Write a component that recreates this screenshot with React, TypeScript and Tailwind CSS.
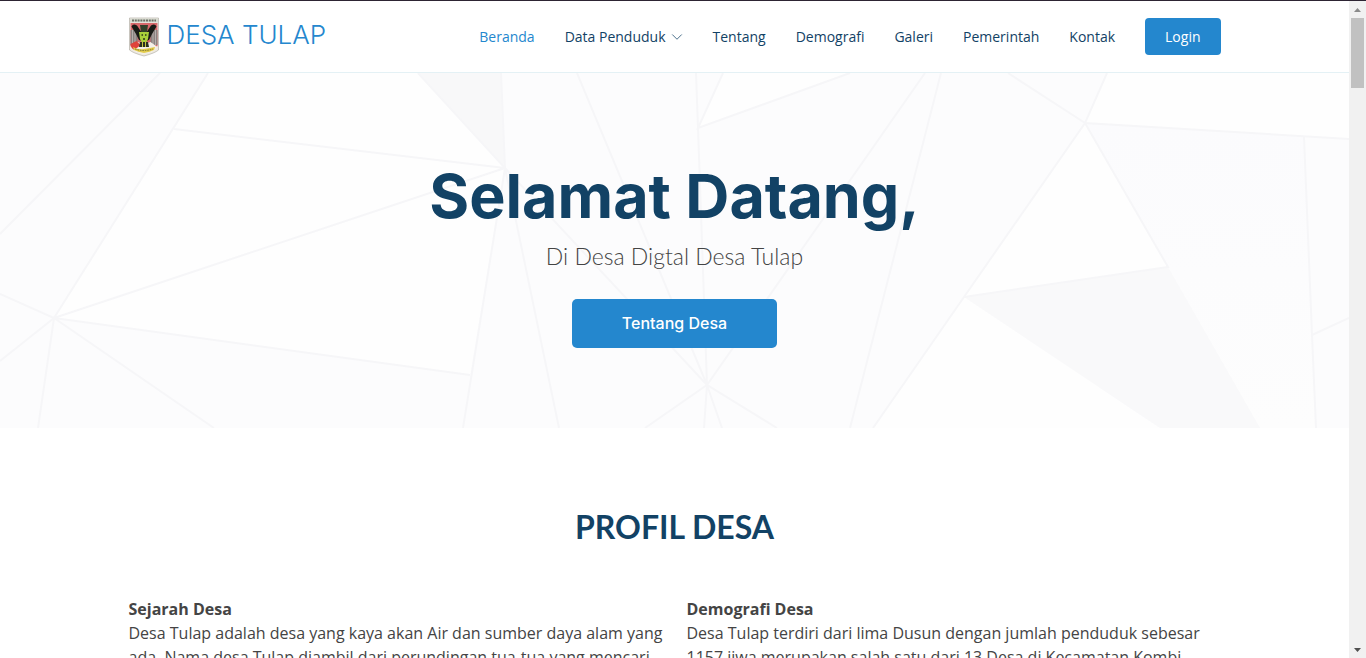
import React from "react";

const links = ["Tentang", "Demografi", "Galeri", "Pemerintah", "Kontak"];

const profiles = [
  {
    title: "Sejarah Desa",
    text: "Desa Tulap adalah desa yang kaya akan Air dan sumber daya alam yang ada. Nama desa Tulap diambil dari perundingan tua-tua yang mencari",
  },
  {
    title: "Demografi Desa",
    text: "Desa Tulap terdiri dari lima Dusun dengan jumlah penduduk sebesar 1157 jiwa merupakan salah satu dari 13 Desa di Kecamatan Kombi",
  },
];

function Crest() {
  return (
    <svg viewBox="0 0 30 40" className="h-10 w-[30px]" aria-hidden="true">
      <path d="M.5 1h29v32Q26 36 15 39Q4 36 .5 33Z" fill="#eeeae2" stroke="#b5b0a8" strokeWidth=".7" />
      <path d="M1 1.500h28v4H1z" fill="#d9dcd2" />
      <path d="M3 3.500h24" stroke="#6d7066" strokeWidth="2" strokeDasharray="2 .8" />
      <path d="M1.500 6h27v23q-3 5-13.500 7Q4 34 1.500 29Z" fill="#d9696c" />
      <path d="M1.500 13h7v15h-7zM21.500 13h7v15h-7z" fill="#8a827f" />
      <path d="M3.500 13v15M6 14v14M24 14v14M26.500 13v15" stroke="#c3bbb9" strokeWidth=".8" />
      <path d="M1.500 30l7-5 6.500 2 6.500-2 7 5q-3 5-13.500 7Q4 35 1.500 30Z" fill="#f4f0e8" />
      <path d="M1.500 27l6-3 4 4-6 5q-4-2-4-6z" fill="#e0433c" />
      <path d="M2.500 9.500Q4 6 8 8.500L13 16v8l-3-1-3-6Z" fill="#191b16" />
      <path d="M27.500 9.500Q26 6 22 8.500L17 16v8l3-1 3-6Z" fill="#191b16" />
      <path d="M11 8h8l-1 7h-6z" fill="#33402a" />
      <path d="M10 15h10l-1 7-2 4h-4l-2-4z" fill="#a9d03a" />
      <path d="M12.500 18h1.500M16 18h1.500M14 22h2" stroke="#2b351a" strokeWidth="1.300" />
      <path d="M11 25h8l1 5H10z" fill="#2b3120" />
      <path d="M13.500 25v5M16.500 25v5" stroke="#c6c63f" />
      <path d="M4 30q5 3 11 2t11-2l-1 3q-4 2-10 3-6-1-10-3z" fill="#e2cb4b" />
      <path d="M6 32q9 3 18 0" fill="none" stroke="#7b7433" strokeWidth="1" strokeDasharray="1.500 1" />
    </svg>
  );
}

function HeroPattern() {
  return (
    <svg
      viewBox="0 73 1349 355"
      preserveAspectRatio="none"
      className="absolute inset-0 h-full w-full"
      aria-hidden="true"
    >
      <defs>
        <linearGradient id="facet" x1="0" y1="0" x2="0" y2="1">
          <stop offset="0" stopColor="#fbfbfd" />
          <stop offset="1" stopColor="#fdfdfd" />
        </linearGradient>
      </defs>
      <g fill="#fefefe">
        <path d="M208 73L174 129L54 318L470 375L505 168L418 73Z" />
        <path d="M698 128L723 73H850Z" />
        <path d="M1085 123L1107 73H1349V139Z" />
        <path d="M1085 123L964 297L1168 267Z" />
        <path d="M964 297L873 428H1160Z" />
      </g>
      <path d="M1085 123L1304 137L1316 428H1260L1168 267Z" fill="url(#facet)" />
      <path d="M418 73H501L505 168Z" fill="#f8f8f9" />
      <path d="M964 297L1168 267L1260 428H1160Z" fill="#f9f9fa" />
      <g fill="none" stroke="#f6f6f8" strokeWidth="2">
        <path d="M160 73L0 234M208 73L54 318M174 129L505 168L54 318" />
        <path d="M0 294L54 318L0 361M38 428L54 318L214 428M54 318L470 375" />
        <path d="M418 73L505 168L463 428M501 73L505 168L559 428M505 168L707 385" />
        <path d="M577 73L707 385M696 73L698 128L707 385M723 73L698 128L850 73M925 73L707 385" />
        <path d="M645 428L707 385L777 428M704 428L707 385L722 428" />
        <path d="M941 73L850 428M873 428L964 297L1085 123L1008 73M1107 73L1085 123L1349 139" />
        <path d="M1085 123L1168 267L964 297M1304 137L1312 335L1316 428M1312 335L1349 318" />
      </g>
    </svg>
  );
}

function Header() {
  return (
    <header className="border-y border-t-[#2d2433] border-b-[#e4f1f5] bg-white">
      <div className="mx-auto flex h-[71px] max-w-[1140px] items-center justify-between px-6">
        <a
          href="#"
          className="flex items-start gap-2 font-[Inter,sans-serif] text-[26px] leading-9 font-light text-[#2487ce]"
        >
          <Crest />
          <span>DESA TULAP</span>
        </a>
        <nav className="flex items-center gap-[30px] text-sm whitespace-nowrap text-[#124265]">
          <a href="#" className="text-[#2487ce]">Beranda</a>
          <a href="#" className="flex items-center gap-[5px]">
            Data Penduduk
            <svg viewBox="0 0 16 16" className="h-3 w-3" fill="none" stroke="currentColor" aria-hidden="true">
              <path d="M2 5l6 6 6-6" strokeLinecap="round" strokeLinejoin="round" />
            </svg>
          </a>
          {links.map((label) => (
            <a key={label} href="#">{label}</a>
          ))}
          <a href="#" className="rounded bg-[#2487ce] px-5 py-2 leading-[21px] text-white">Login</a>
        </nav>
      </div>
    </header>
  );
}

function ScrollRail() {
  return (
    <div className="flex w-[17px] shrink-0 flex-col items-center border-t border-[#2d2433] bg-[#f1f1f1]" aria-hidden="true">
      <svg viewBox="0 0 17 17" className="h-[17px] w-[17px]"><path d="M5 11h7L8.500 7z" fill="#8b8b8b" /></svg>
      <div className="h-[70px] w-[13px] bg-[#c1c1c1]" />
      <svg viewBox="0 0 17 17" className="mt-auto h-[17px] w-[17px]"><path d="M5 7h7L8.500 11z" fill="#505050" /></svg>
    </div>
  );
}

export default function App() {
  return (
    <div className="flex h-screen overflow-hidden bg-white font-['Open_Sans',sans-serif] text-[#444444]">
      <div className="min-w-0 flex-1">
        <Header />
        <main>
          <section className="relative bg-[#fcfcfd]">
            <HeroPattern />
            <div className="relative flex flex-col items-center pt-[87px] pb-20 text-center">
              <h1 className="font-[Inter,sans-serif] text-[61px] leading-[72px] font-bold text-[#124265]">
                Selamat Datang,
              </h1>
              <h2 className="mt-2 font-[Lato,sans-serif] text-[23px] leading-8 font-light text-[#444444]">
                Di Desa Digtal Desa Tulap
              </h2>
              <a
                href="#profil"
                className="mt-[27px] rounded-[5px] bg-[#2487ce] px-[50px] py-3.5 font-[Inter,sans-serif] text-base leading-[21px] font-medium text-white"
              >
                Tentang Desa
              </a>
            </div>
          </section>
          <section id="profil" className="mx-auto max-w-[1140px] px-6 pt-20">
            <h2 className="text-center font-[Lato,sans-serif] text-[32px] leading-[38px] font-bold text-[#124265]">
              PROFIL DESA
            </h2>
            <div className="mt-[51px] grid grid-cols-2 gap-6 text-base">
              {profiles.map((profile) => (
                <div key={profile.title}>
                  <h3 className="font-bold">{profile.title}</h3>
                  <p>{profile.text}</p>
                </div>
              ))}
            </div>
          </section>
        </main>
      </div>
      <ScrollRail />
    </div>
  );
}
